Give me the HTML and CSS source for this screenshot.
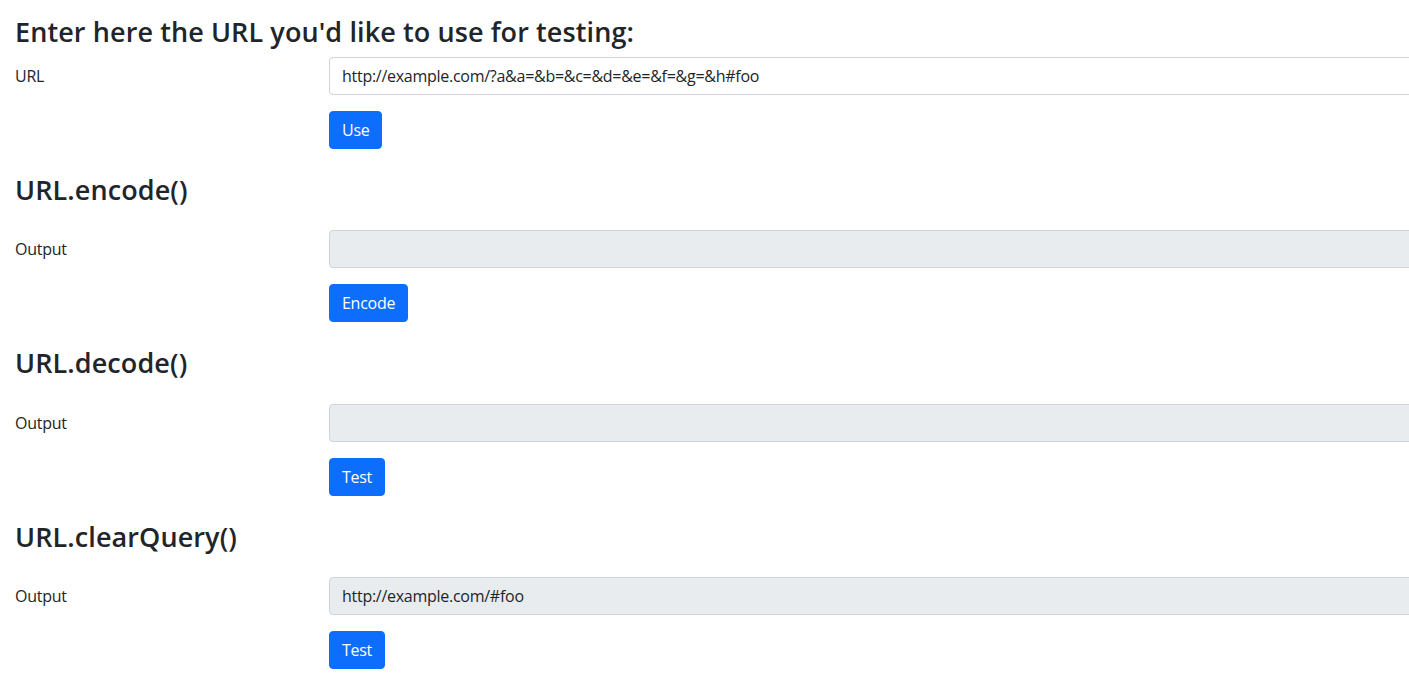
FILE: index.html
```html
<!DOCTYPE html>
<html lang="en">
<head>
<meta charset="utf-8">
<title>URL tests</title>
<link rel="stylesheet" href="styles.css">
</head>
<body>
<main class="page">
  <section class="block">
    <h3 class="title title-first">Enter here the URL you'd like to use for testing:</h3>
    <div class="row">
      <label class="label" for="url">URL</label>
      <input class="field" id="url" type="text" value="http://example.com/?a&amp;a=&amp;b=&amp;c=&amp;d=&amp;e=&amp;f=&amp;g=&amp;h#foo">
    </div>
    <div class="row row-btn">
      <span></span>
      <div><button class="btn" type="button">Use</button></div>
    </div>
  </section>

  <section class="block">
    <h3 class="title">URL.encode()</h3>
    <div class="row">
      <label class="label">Output</label>
      <input class="field field-disabled" type="text" value="" disabled>
    </div>
    <div class="row row-btn">
      <span></span>
      <div><button class="btn" type="button">Encode</button></div>
    </div>
  </section>

  <section class="block">
    <h3 class="title">URL.decode()</h3>
    <div class="row">
      <label class="label">Output</label>
      <input class="field field-disabled" type="text" value="" disabled>
    </div>
    <div class="row row-btn">
      <span></span>
      <div><button class="btn" type="button">Test</button></div>
    </div>
  </section>

  <section class="block">
    <h3 class="title">URL.clearQuery()</h3>
    <div class="row">
      <label class="label">Output</label>
      <input class="field field-disabled" type="text" value="http://example.com/#foo" disabled>
    </div>
    <div class="row row-btn">
      <span></span>
      <div><button class="btn" type="button">Test</button></div>
    </div>
  </section>
</main>
</body>
</html>
```

FILE: styles.css
```css
html, body {
  margin: 0;
  padding: 0;
  overflow: hidden;
  background: #fff;
}

body {
  font-family: "Open Sans", "Noto Sans", "Liberation Sans", sans-serif;
  font-size: 16px;
  line-height: 1.5;
  color: #212529;
  letter-spacing: -0.27px;
}

.page {
  padding: 15px 0 0 15px;
  width: 1600px;
}

.block {
  margin-bottom: 24px;
}

.title {
  margin: 0 0 24px;
  font-size: 27px;
  font-weight: 600;
  line-height: 33.6px;
  letter-spacing: 0.1px;
}

.title-first {
  margin-bottom: 8px;
}

.row {
  display: grid;
  grid-template-columns: 314px 1200px;
  align-items: center;
  margin-bottom: 16px;
}

.row-btn {
  margin-bottom: 0;
}

.label {
  font-size: 16px;
  line-height: 24px;
}

.field {
  box-sizing: border-box;
  height: 38px;
  width: 100%;
  padding: 6px 12px;
  font-family: inherit;
  font-size: 16px;
  line-height: 24px;
  letter-spacing: -0.27px;
  color: #212529;
  background: #fff;
  border: 1px solid #ced4da;
  border-radius: 4px;
  margin: 0;
}

.field-disabled {
  background: #e9ecef;
  opacity: 1;
  -webkit-text-fill-color: #212529;
}

.btn {
  box-sizing: border-box;
  height: 38px;
  padding: 6px 12px;
  font-family: inherit;
  font-size: 16px;
  line-height: 24px;
  letter-spacing: -0.27px;
  color: #fff;
  background: #0d6efd;
  border: 1px solid #0d6efd;
  border-radius: 4px;
  cursor: pointer;
}
```
